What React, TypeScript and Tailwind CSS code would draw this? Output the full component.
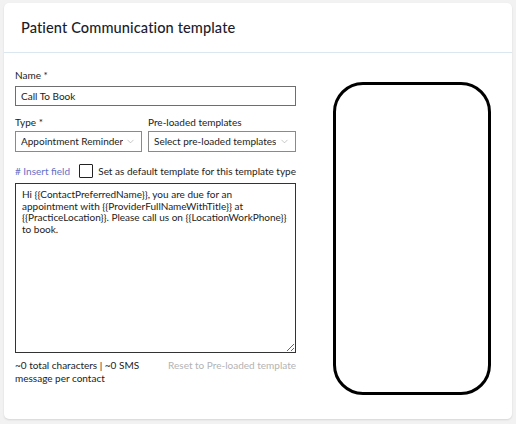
import { ChevronDown } from 'lucide-react'

const font = { fontFamily: 'Lato, "Open Sans", sans-serif' }

function Select({ value, width }: { value: string; width: string }) {
  return (
    <div
      className={`${width} h-[21px] border border-[#8a8a8a] flex items-center justify-between pl-[5px] pr-[5px] text-[10px] text-[#222]`}
    >
      <span className="whitespace-nowrap overflow-hidden">{value}</span>
      <ChevronDown className="w-[11px] h-[11px] text-[#a0a0a0] shrink-0" strokeWidth={1.25} />
    </div>
  )
}

export default function App() {
  const message =
    'Hi {{ContactPreferredName}}, you are due for an appointment with {{ProviderFullNameWithTitle}} at {{PracticeLocation}}. Please call us on {{LocationWorkPhone}} to book.'

  return (
    <div className="w-[516px] h-[424px] bg-[#f2f2f2] pt-[3px] pl-[4px]" style={font}>
      <div className="w-[508px] h-[416px] bg-white rounded-[5px] shadow-[0_1px_2px_rgba(0,0,0,0.12)] flex flex-col">
        {/* Header */}
        <div className="h-[50px] border-b border-[#dbe7ee] flex items-center pl-[17px] shrink-0">
          <h1 className="text-[14.6px] font-medium text-[#1c1c2b] tracking-[0.1px]">
            Patient Communication template
          </h1>
        </div>

        {/* Body */}
        <div className="flex pl-[11px] pt-[14px]">
          <div className="w-[281px] flex flex-col text-[#222]">
            <label className="text-[10px] leading-[16px] mb-[3px]">Name *</label>
            <div className="h-[20px] border border-[#6e6e6e] flex items-center pl-[5px] text-[10px]">
              Call To Book
            </div>

            <div className="flex gap-[6px] mt-[8px]">
              <div className="flex flex-col">
                <label className="text-[10px] leading-[16px] mb-[1px]">Type *</label>
                <Select value="Appointment Reminder" width="w-[127px]" />
              </div>
              <div className="flex flex-col">
                <label className="text-[10px] leading-[16px] mb-[1px]">Pre-loaded templates</label>
                <Select value="Select pre-loaded templates" width="w-[148px]" />
              </div>
            </div>

            <div className="flex items-center mt-[9px] h-[20px] text-[10px] whitespace-nowrap">
              <span className="text-[#6570c8] w-[66px]"># Insert field</span>
              <span className="w-[14px] h-[14px] border border-[#222] rounded-[1px] mr-[5px] shrink-0" />
              <span>Set as default template for this template type</span>
            </div>

            <textarea
              readOnly
              defaultValue={message}
              className="mt-[2px] h-[170px] w-full border border-[#333] px-[6px] pt-[5px] text-[10px] leading-[11.5px] text-[#222] resize-y outline-none"
              style={font}
            />

            <div className="flex justify-between mt-[6px] text-[10px] leading-[13px]">
              <span className="w-[130px]">~0 total characters | ~0 SMS message per contact</span>
              <span className="text-[#b3b3b3] whitespace-nowrap">Reset to Pre-loaded template</span>
            </div>
          </div>

          {/* Phone preview */}
          <div className="ml-[37px] mt-[15px] w-[158px] h-[313px] border-[3px] border-black rounded-[30px]" />
        </div>
      </div>
    </div>
  )
}
